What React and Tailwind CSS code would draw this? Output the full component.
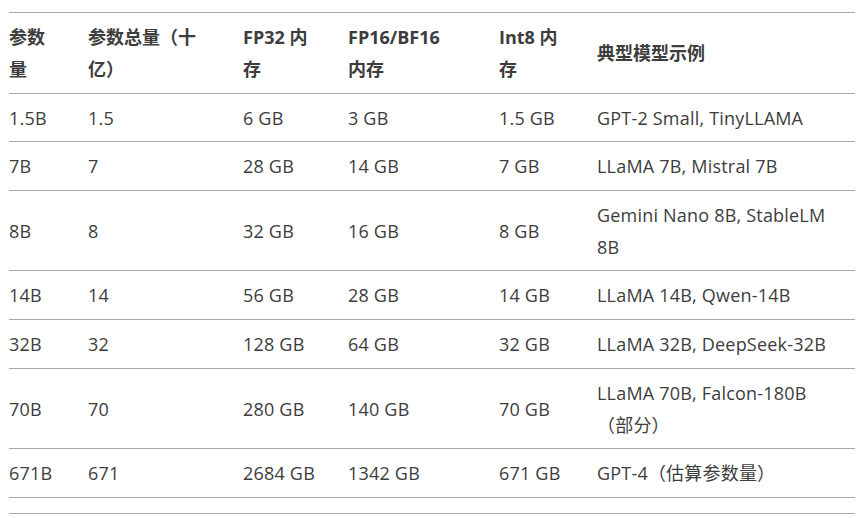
const cols = 'grid grid-cols-[79px_155px_105px_151px_98px_258px] items-center border-b border-[#a9a9a9]'

const rows = [
  { h: 'h-[48px]', cells: ['1.5B', '1.5', '6 GB', '3 GB', '1.5 GB', ['GPT-2 Small, TinyLLAMA']] },
  { h: 'h-[49px]', cells: ['7B', '7', '28 GB', '14 GB', '7 GB', ['LLaMA 7B, Mistral 7B']] },
  { h: 'h-[80px]', cells: ['8B', '8', '32 GB', '16 GB', '8 GB', ['Gemini Nano 8B, StableLM', '8B']] },
  { h: 'h-[49px]', cells: ['14B', '14', '56 GB', '28 GB', '14 GB', ['LLaMA 14B, Qwen-14B']] },
  { h: 'h-[49px]', cells: ['32B', '32', '128 GB', '64 GB', '32 GB', ['LLaMA 32B, DeepSeek-32B']] },
  { h: 'h-[80px]', cells: ['70B', '70', '280 GB', '140 GB', '70 GB', ['LLaMA 70B, Falcon-180B', '（部分）']] },
  { h: 'h-[49px]', cells: ['671B', '671', '2684 GB', '1342 GB', '671 GB', ['GPT-4（估算参数量）']] },
]

const header = [
  ['参数', '量'],
  ['参数总量（十', '亿）'],
  ['FP32 内', '存'],
  ['FP16/BF16', '内存'],
  ['Int8 内', '存'],
  ['典型模型示例'],
]

export default function App() {
  return (
    <div className="w-[868px] h-[518px] bg-white overflow-hidden pt-[12px] pl-[9px] text-[#3d3d3d] font-['Open_Sans','Noto_Sans_CJK_SC',sans-serif] text-[18px] leading-[32px]">
      <div className="w-[846px] border-t border-[#a9a9a9]">
        <div className={`${cols} h-[81px] font-bold`}>
          {header.map((lines, i) => (
            <div key={i} className="whitespace-nowrap">
              {lines.map((l, j) => (
                <div key={j}>{l}</div>
              ))}
            </div>
          ))}
        </div>
        {rows.map((r, i) => (
          <div key={i} className={`${cols} ${r.h}`}>
            {r.cells.map((c, j) => (
              <div key={j} className="whitespace-nowrap tracking-[0.2px]">
                {Array.isArray(c) ? c.map((l, k) => <div key={k}>{l}</div>) : c}
              </div>
            ))}
          </div>
        ))}
        <div className="h-[16px] border-b border-[#a9a9a9]" />
      </div>
    </div>
  )
}
